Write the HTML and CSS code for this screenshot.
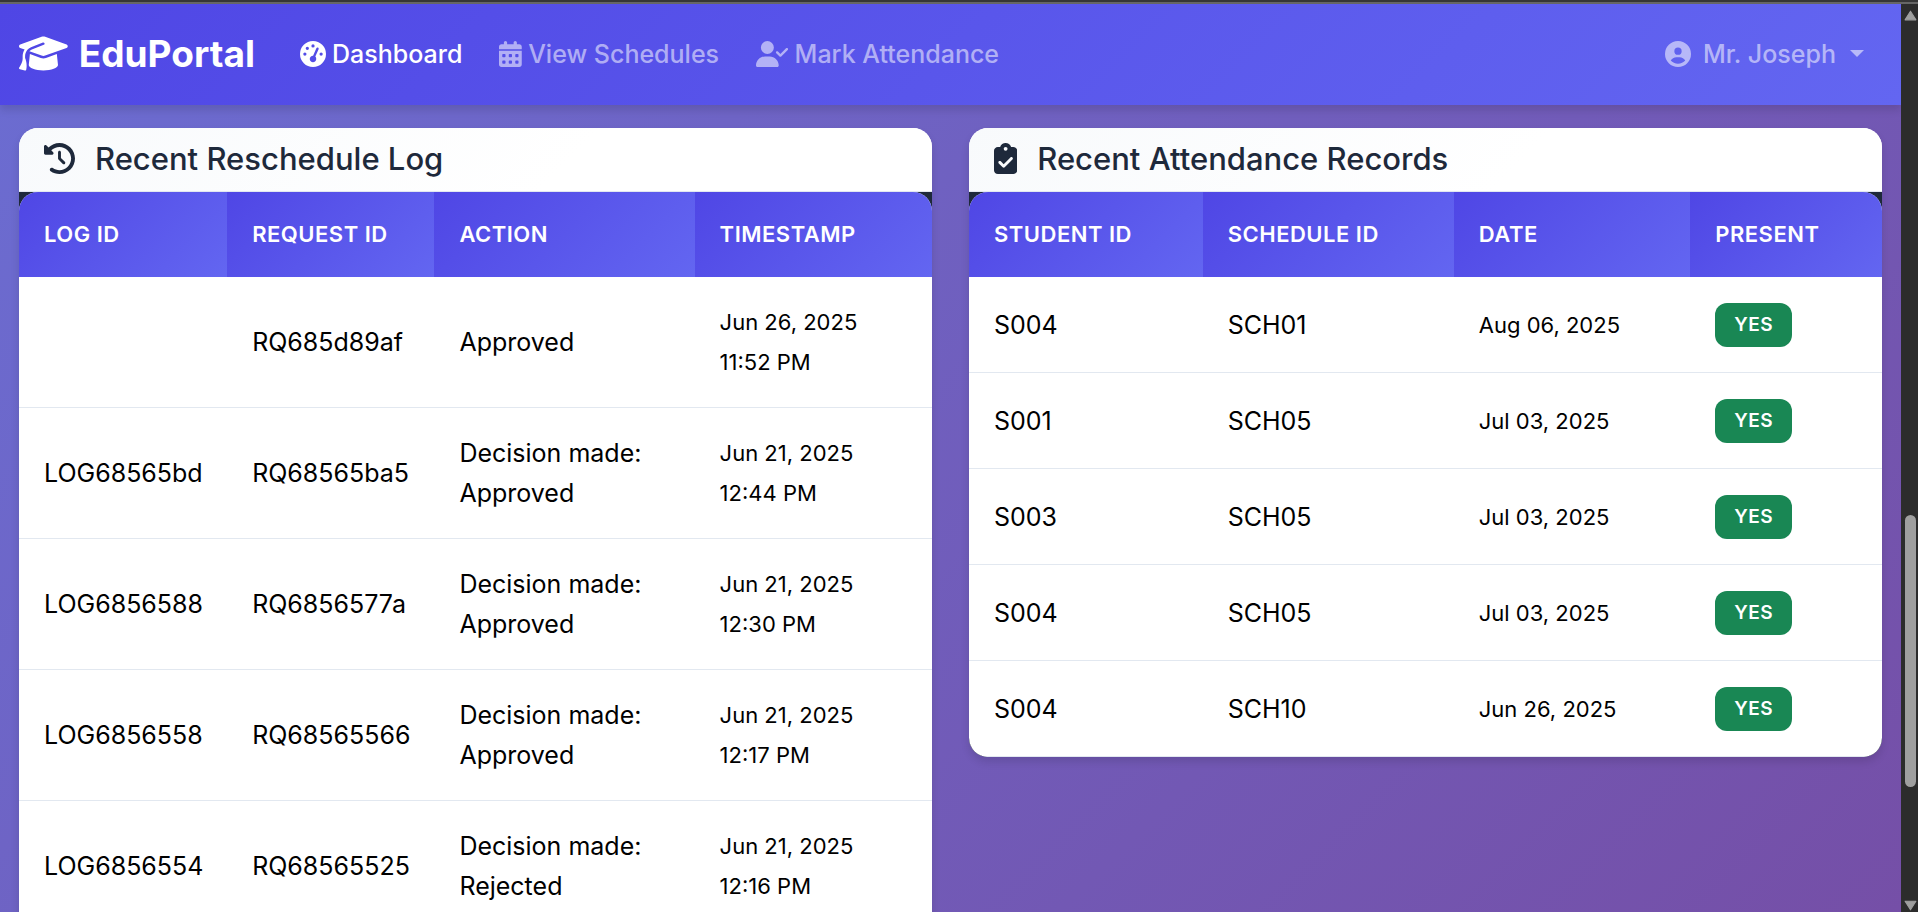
FILE: index.html
```html
<!DOCTYPE html>
<html lang="en">
<head>
<meta charset="utf-8">
<title>EduPortal</title>
<link rel="stylesheet" href="styles.css">
</head>
<body>
<div class="window-edge"></div>
<div class="viewport">
  <div class="page">
    <nav class="navbar">
      <a class="brand" href="#">
        <svg class="brand-icon" viewBox="0 0 640 512" aria-hidden="true"><path d="M320 32c-8.1 0-16.1 1.4-23.7 4.1L15.8 137.4C6.3 140.9 0 149.9 0 160s6.3 19.1 15.8 22.6l57.9 20.9C57.3 229.3 48 259.8 48 291.9l0 28.1c0 28.4-10.8 57.7-22.3 80.8c-6.5 13-13.9 25.8-22.5 37.6C0 442.7-.9 448.3 .9 453.4s6 8.9 11.2 10.2l64 16c4.2 1.1 8.7 .3 12.4-2s6.3-6.1 7.1-10.4c8.6-42.8 4.3-81.2-2.1-108.7C90.3 344.3 86 329.8 80 316.5l0-24.6c0-30.2 10.2-58.7 27.9-81.5c12.9-15.5 29.6-28 49.2-35.7l157-61.7c8.2-3.2 17.5 .8 20.7 9s-.8 17.5-9 20.7l-157 61.7c-12.4 4.9-23.3 12.4-32.2 21.6l159.6 57.6c7.6 2.7 15.6 4.1 23.7 4.1s16.1-1.4 23.7-4.1L624.2 182.6c9.5-3.4 15.8-12.5 15.8-22.6s-6.3-19.1-15.8-22.6L343.7 36.1C336.1 33.4 328.1 32 320 32zM128 408c0 35.3 86 72 192 72s192-36.7 192-72L496.7 262.6 354.5 314c-11.1 4-22.8 6-34.5 6s-23.5-2-34.5-6L143.3 262.6 128 408z"/></svg>
        <span>EduPortal</span>
      </a>
      <div class="nav-links">
        <a class="nav-link active" href="#">
          <svg class="nav-icon" viewBox="0 0 512 512" aria-hidden="true"><path d="M0 256a256 256 0 1 1 512 0A256 256 0 1 1 0 256zM288 96a32 32 0 1 0 -64 0 32 32 0 1 0 64 0zM256 416c35.3 0 64-28.7 64-64c0-17.4-6.9-33.1-18.1-44.6L366 161.7c5.3-12.1-.2-26.3-12.3-31.6s-26.3 .2-31.6 12.3L257.9 288c-.6 0-1.3 0-1.9 0c-35.3 0-64 28.7-64 64s28.7 64 64 64zM176 144a32 32 0 1 0 -64 0 32 32 0 1 0 64 0zM96 288a32 32 0 1 0 0-64 32 32 0 1 0 0 64zm352-32a32 32 0 1 0 -64 0 32 32 0 1 0 64 0z"/></svg>
          <span>Dashboard</span>
        </a>
        <a class="nav-link" href="#">
          <svg class="nav-icon" viewBox="0 0 448 512" aria-hidden="true"><path fill-rule="evenodd" d="M128 0c17.7 0 32 14.3 32 32v32h128V32c0-17.7 14.3-32 32-32s32 14.3 32 32v32h48c26.500 0 48 21.500 48 48v48H0v-48C0 85.500 21.500 64 48 64h48V32c0-17.700 14.300-32 32-32zM0 192h448v272c0 26.500-21.500 48-48 48H48c-26.500 0-48-21.500-48-48V192zm80 64a16 16 0 0 0-16 16v32a16 16 0 0 0 16 16h32a16 16 0 0 0 16-16v-32a16 16 0 0 0-16-16zm128 0a16 16 0 0 0-16 16v32a16 16 0 0 0 16 16h32a16 16 0 0 0 16-16v-32a16 16 0 0 0-16-16zm128 0a16 16 0 0 0-16 16v32a16 16 0 0 0 16 16h32a16 16 0 0 0 16-16v-32a16 16 0 0 0-16-16zM80 384a16 16 0 0 0-16 16v32a16 16 0 0 0 16 16h32a16 16 0 0 0 16-16v-32a16 16 0 0 0-16-16zm128 0a16 16 0 0 0-16 16v32a16 16 0 0 0 16 16h32a16 16 0 0 0 16-16v-32a16 16 0 0 0-16-16zm128 0a16 16 0 0 0-16 16v32a16 16 0 0 0 16 16h32a16 16 0 0 0 16-16v-32a16 16 0 0 0-16-16z"/></svg>
          <span>View Schedules</span>
        </a>
        <a class="nav-link" href="#">
          <svg class="nav-icon" viewBox="0 0 640 512" aria-hidden="true"><path d="M96 128a128 128 0 1 1 256 0A128 128 0 1 1 96 128zM0 482.3C0 383.8 79.8 304 178.3 304l91.4 0C368.2 304 448 383.8 448 482.3c0 16.4-13.3 29.7-29.7 29.7L29.7 512C13.3 512 0 498.7 0 482.3zM625 177L497 305c-9.4 9.4-24.6 9.4-33.9 0l-64-64c-9.4-9.4-9.4-24.6 0-33.9s24.6-9.4 33.9 0l47 47L591 143c9.4-9.4 24.6-9.4 33.9 0s9.4 24.6 0 33.9z"/></svg>
          <span>Mark Attendance</span>
        </a>
      </div>
      <button class="user-menu" type="button" aria-haspopup="true">
        <svg class="nav-icon" viewBox="0 0 512 512" aria-hidden="true"><path d="M399 384.2C376.9 345.8 335.4 320 288 320l-64 0c-47.4 0-88.9 25.8-111 64.2c35.2 39.2 86.2 63.8 143 63.8s107.8-24.7 143-63.8zM0 256a256 256 0 1 1 512 0A256 256 0 1 1 0 256zm256 16a72 72 0 1 0 0-144 72 72 0 1 0 0 144z"/></svg>
        <span>Mr. Joseph</span>
        <span class="caret"></span>
      </button>
    </nav>

    <main class="content">
      <section class="card">
        <h2 class="card-title">
          <svg class="title-icon" viewBox="0 0 512 512" aria-hidden="true"><path d="M75 75L41 41C25.9 25.9 0 36.6 0 57.9L0 168c0 13.3 10.7 24 24 24l110.1 0c21.4 0 32.1-25.9 17-41l-30.8-30.8C155 85.5 203 64 256 64c106 0 192 86 192 192s-86 192-192 192c-40.8 0-78.6-12.7-109.7-34.4c-14.5-10.1-34.4-6.6-44.6 7.9s-6.6 34.4 7.9 44.6C151.2 495 201.7 512 256 512c141.4 0 256-114.6 256-256S397.4 0 256 0C185.3 0 121.3 28.7 75 75zm181 53c-13.3 0-24 10.7-24 24l0 104c0 6.4 2.5 12.5 7 17l72 72c9.4 9.4 24.6 9.4 33.9 0s9.4-24.6 0-33.9l-65-65 0-94.1c0-13.3-10.7-24-24-24z"/></svg>
          <span>Recent Reschedule Log</span>
        </h2>
        <div class="table-wrap">
          <table class="log-table">
            <thead>
              <tr><th scope="col">Log ID</th><th scope="col">Request ID</th><th scope="col">Action</th><th scope="col">Timestamp</th></tr>
            </thead>
            <tbody>
              <tr><td></td><td>RQ685d89af</td><td>Approved</td><td><small>Jun 26, 2025<br>11:52 PM</small></td></tr>
              <tr><td>LOG68565bd</td><td>RQ68565ba5</td><td>Decision made: Approved</td><td><small>Jun 21, 2025<br>12:44 PM</small></td></tr>
              <tr><td>LOG6856588</td><td>RQ6856577a</td><td>Decision made: Approved</td><td><small>Jun 21, 2025<br>12:30 PM</small></td></tr>
              <tr><td>LOG6856558</td><td>RQ68565566</td><td>Decision made: Approved</td><td><small>Jun 21, 2025<br>12:17 PM</small></td></tr>
              <tr><td>LOG6856554</td><td>RQ68565525</td><td>Decision made: Rejected</td><td><small>Jun 21, 2025<br>12:16 PM</small></td></tr>
            </tbody>
          </table>
        </div>
      </section>

      <section class="card">
        <h2 class="card-title">
          <svg class="title-icon" viewBox="0 0 384 512" aria-hidden="true"><path d="M192 0c-41.8 0-77.4 26.7-90.5 64L64 64C28.7 64 0 92.7 0 128L0 448c0 35.3 28.7 64 64 64l256 0c35.3 0 64-28.7 64-64l0-320c0-35.3-28.7-64-64-64l-37.5 0C269.4 26.7 233.8 0 192 0zm0 64a32 32 0 1 1 0 64 32 32 0 1 1 0-64zM305 273L177 401c-9.4 9.4-24.6 9.4-33.9 0L79 337c-9.4-9.4-9.4-24.6 0-33.9s24.6-9.4 33.9 0l47 47L271 239c9.4-9.4 24.6-9.4 33.9 0s9.4 24.6 0 33.9z"/></svg>
          <span>Recent Attendance Records</span>
        </h2>
        <div class="table-wrap">
          <table class="attendance-table">
            <thead>
              <tr><th scope="col">Student ID</th><th scope="col">Schedule ID</th><th scope="col">Date</th><th scope="col">Present</th></tr>
            </thead>
            <tbody>
              <tr><td>S004</td><td>SCH01</td><td><small>Aug 06, 2025</small></td><td><span class="badge">Yes</span></td></tr>
              <tr><td>S001</td><td>SCH05</td><td><small>Jul 03, 2025</small></td><td><span class="badge">Yes</span></td></tr>
              <tr><td>S003</td><td>SCH05</td><td><small>Jul 03, 2025</small></td><td><span class="badge">Yes</span></td></tr>
              <tr><td>S004</td><td>SCH05</td><td><small>Jul 03, 2025</small></td><td><span class="badge">Yes</span></td></tr>
              <tr><td>S004</td><td>SCH10</td><td><small>Jun 26, 2025</small></td><td><span class="badge">Yes</span></td></tr>
            </tbody>
          </table>
        </div>
      </section>
    </main>
  </div>

  <div class="scrollbar" aria-hidden="true">
    <svg class="scroll-arrow" viewBox="0 0 12 10"><path d="M6 1 11 9H1z"/></svg>
    <div class="scroll-track">
      <div class="scroll-thumb"></div>
    </div>
    <svg class="scroll-arrow" viewBox="0 0 12 10"><path d="M6 9 1 1h10z"/></svg>
  </div>
</div>
</body>
</html>
```

FILE: styles.css
```css
:root {
  --primary: linear-gradient(135deg, #4f46e5 0%, #6366f1 100%);
  --dark: #1e293b;
  --line: #e2e8f0;
  --success: #198754;
  --radius: 19px;
}

* {
  box-sizing: border-box;
}

body {
  margin: 0;
  height: 100vh;
  display: flex;
  flex-direction: column;
  overflow: hidden;
  font-family: Inter, "Liberation Sans", sans-serif;
  font-size: 25px;
  line-height: 40px;
  color: #000;
}

.window-edge {
  flex: none;
  height: 4px;
  background: #363636;
  border-bottom: 2px solid #666;
}

.viewport {
  flex: 1;
  min-height: 0;
  display: flex;
}

.page {
  flex: 1;
  min-width: 0;
  overflow: hidden;
  background: linear-gradient(135deg, #6b6dd2 0%, #754fa7 100%);
}

/* Navigation */

.navbar {
  position: relative;
  display: flex;
  align-items: center;
  height: 101px;
  padding: 0 37px 2px 19px;
  background: var(--primary);
  box-shadow: 0 5px 8px rgba(0, 0, 0, 0.12);
}

.brand {
  display: flex;
  align-items: center;
  gap: 11px;
  color: #fff;
  font-size: 37px;
  font-weight: 700;
  text-decoration: none;
}

.brand-icon {
  height: 39px;
  fill: currentColor;
}

.nav-links {
  display: flex;
  gap: 37px;
  margin-left: 45px;
}

.nav-link,
.user-menu {
  display: flex;
  align-items: center;
  gap: 6px;
  color: rgba(255, 255, 255, 0.55);
  font-weight: 500;
  text-decoration: none;
}

.nav-link.active {
  color: #fff;
}

.nav-icon {
  height: 26px;
  fill: currentColor;
}

.user-menu {
  gap: 12px;
  margin-left: auto;
  padding: 0;
  border: 0;
  background: none;
  font: inherit;
  font-weight: 500;
}

.caret {
  margin-left: 2px;
  border: 7px solid transparent;
  border-top-color: currentColor;
  border-bottom: 0;
}

/* Cards */

.content {
  display: grid;
  grid-template-columns: 1fr 1fr;
  align-items: start;
  gap: 37px;
  padding: 23px 19px;
}

.card {
  overflow: hidden;
  border-radius: var(--radius);
  background: #fff;
  box-shadow: 0 5px 8px rgba(0, 0, 0, 0.12);
}

.card-title {
  display: flex;
  align-items: center;
  gap: 20px;
  height: 64px;
  margin: 0;
  padding: 0 25px 2px;
  border-bottom: 1px solid var(--line);
  background: linear-gradient(135deg, #f8fafc 0%, #fff 60%);
  color: var(--dark);
  font-size: 31px;
  font-weight: 500;
}

.title-icon {
  height: 31px;
  fill: currentColor;
}

.table-wrap {
  background: var(--dark);
}

/* Tables */

table {
  width: 100%;
  table-layout: fixed;
  border-collapse: separate;
  border-spacing: 0;
  overflow: hidden;
  border-radius: var(--radius);
  background: #fff;
}

th,
td {
  padding: 25px;
  text-align: left;
  vertical-align: middle;
}

th {
  height: 85px;
  padding-block: 21px 23px;
  background: var(--primary);
  color: #fff;
  font-size: 22px;
  font-weight: 600;
  letter-spacing: 0.5px;
  text-transform: uppercase;
}

td {
  border-bottom: 1px solid var(--line);
}

.log-table th:nth-child(1) { width: 22.8%; }
.log-table th:nth-child(2) { width: 22.7%; }
.log-table th:nth-child(3) { width: 28.5%; }

.attendance-table th:nth-child(1) { width: 25.6%; }
.attendance-table th:nth-child(2) { width: 27.5%; }
.attendance-table th:nth-child(3) { width: 25.9%; }

.attendance-table td {
  height: 96px;
  padding-block: 20px;
}

small {
  display: block;
  font-size: 22px;
}

.badge {
  display: block;
  width: fit-content;
  padding: 2px 19px;
  border-radius: 12px;
  background: var(--success);
  color: #fff;
  font-size: 19px;
  font-weight: 600;
  letter-spacing: 0.5px;
  text-transform: uppercase;
}

/* Scrollbar */

.scrollbar {
  flex: none;
  display: flex;
  flex-direction: column;
  width: 17px;
  padding: 6px 1px 1px 3px;
  background: #2c2c2c;
}

.scroll-arrow {
  height: 11px;
  fill: #9f9f9f;
  stroke: #9f9f9f;
  stroke-linejoin: round;
}

.scroll-track {
  flex: 1;
  padding: 0 1px;
}

.scroll-thumb {
  height: 31%;
  margin-top: 494px;
  border-radius: 6px;
  background: #9f9f9f;
}
```
